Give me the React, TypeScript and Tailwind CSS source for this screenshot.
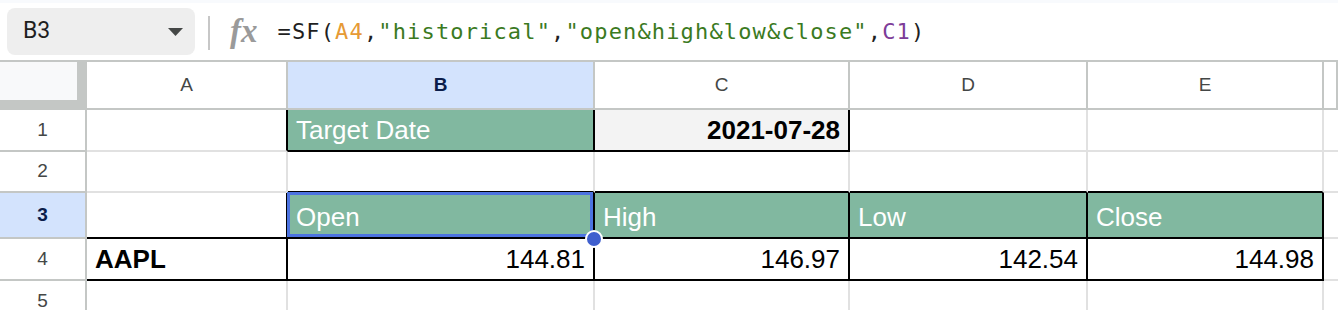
import React from "react";

type CellDef = {
  text?: string;
  right?: boolean;
  bold?: boolean;
  green?: boolean;
  gray?: boolean;
  br?: boolean; // black right border
  bb?: boolean; // black bottom border
};

const COLS = ["w-[201px]", "w-[307px]", "w-[255px]", "w-[238px]", "w-[236px]", "flex-1"];
const LETTERS = ["A", "B", "C", "D", "E", ""];

const ROWS: { n: number; h: string; cells: CellDef[] }[] = [
  {
    n: 1,
    h: "h-[42px]",
    cells: [
      { br: true },
      { text: "Target Date", green: true, br: true, bb: true },
      { text: "2021-07-28", right: true, bold: true, gray: true, br: true, bb: true },
      {},
      {},
      {},
    ],
  },
  {
    n: 2,
    h: "h-[41px]",
    cells: [{}, { bb: true }, { bb: true }, { bb: true }, { bb: true }, {}],
  },
  {
    n: 3,
    h: "h-[46px]",
    cells: [
      { br: true, bb: true },
      { text: "Open", green: true, br: true, bb: true },
      { text: "High", green: true, br: true, bb: true },
      { text: "Low", green: true, br: true, bb: true },
      { text: "Close", green: true, br: true, bb: true },
      {},
    ],
  },
  {
    n: 4,
    h: "h-[42px]",
    cells: [
      { text: "AAPL", bold: true, br: true, bb: true },
      { text: "144.81", right: true, br: true, bb: true },
      { text: "146.97", right: true, br: true, bb: true },
      { text: "142.54", right: true, br: true, bb: true },
      { text: "144.98", right: true, br: true, bb: true },
      {},
    ],
  },
  { n: 5, h: "h-[42px]", cells: [{}, {}, {}, {}, {}, {}] },
];

function Formula() {
  return (
    <div className="ml-[20px] whitespace-nowrap font-['DejaVu_Sans_Mono',monospace] text-[22px] tracking-[1.15px] text-[#1f1f1f]">
      <span>=SF(</span>
      <span className="text-[#e69a35]">A4</span>
      <span>,</span>
      <span className="text-[#3b7a1f]">"historical"</span>
      <span>,</span>
      <span className="text-[#3b7a1f]">"open&amp;high&amp;low&amp;close"</span>
      <span>,</span>
      <span className="text-[#7d3c98]">C1</span>
      <span>)</span>
    </div>
  );
}

function Toolbar() {
  return (
    <div>
      <div className="h-[3px] bg-[#f8fafd]" />
      <div className="flex h-[57px] items-center pl-[7px]">
        <div className="flex h-[47px] w-[188px] items-center rounded-lg bg-[#eeeeee] pl-[16px] pr-[12px]">
          <span className="font-['Roboto',sans-serif] text-[23px] text-[#1f1f1f]">B3</span>
          <svg className="ml-auto" width="15" height="8" viewBox="0 0 15 8">
            <path d="M0 0h15L7.5 8z" fill="#444746" />
          </svg>
        </div>
        <div className="ml-[13px] mt-[3px] h-[34px] w-[2px] bg-[#c7c7c7]" />
        <div className="ml-[20px] font-['Liberation_Serif',serif] text-[33px] font-bold italic leading-none text-[#9a9a9a]">
          fx
        </div>
        <Formula />
      </div>
    </div>
  );
}

function HeaderRow() {
  return (
    <div className="flex h-[50px] border-t-2 border-[#c4c7c5] font-['Liberation_Sans',sans-serif]">
      <div className="w-[87px] shrink-0 border-b-[10px] border-r-[10px] border-[#c4c7c5] bg-[#f8f9fa]" />
      {COLS.map((w, i) => (
        <div
          key={i}
          className={`${w} flex shrink-0 items-center justify-center border-b-2 border-r-2 border-[#c4c7c5] text-[19px] ${
            i === 1 ? "bg-[#d3e3fd] font-bold text-[#0b1d4a]" : "bg-white text-[#444746]"
          }`}
        >
          {LETTERS[i]}
        </div>
      ))}
    </div>
  );
}

function Cell({ def, w, n, col }: { def: CellDef; w: string; n: number; col: number }) {
  const selected = n === 3 && col === 1;
  return (
    <div
      className={`${w} relative flex h-full shrink-0 items-center border-b-2 border-r-2 px-[8px] text-[26px] ${
        def.br ? "border-r-black" : "border-r-[#e1e1e1]"
      } ${def.bb ? "border-b-black" : "border-b-[#e1e1e1]"} ${
        def.green ? "bg-[#81b8a0] text-white" : def.gray ? "bg-[#f3f3f3] text-black" : "bg-white text-black"
      } ${def.right ? "justify-end" : "justify-start"} ${def.bold ? "font-bold" : ""} ${
        n === 3 ? "pt-[4px]" : ""
      }`}
    >
      {def.text}
      {selected && (
        <>
          <div className="absolute -left-[1px] -top-[1px] bottom-[0px] right-[0px] border-[3px] border-[#4c73e0]" />
          <div className="absolute -bottom-[11px] -right-[10px] z-10 h-[18px] w-[18px] rounded-full border-2 border-white bg-[#3f5fce]" />
        </>
      )}
    </div>
  );
}

export default function App() {
  return (
    <div className="h-[310px] w-[1338px] overflow-hidden bg-white">
      <Toolbar />
      <HeaderRow />
      {ROWS.map((row) => (
        <div key={row.n} className={`flex ${row.h} font-['Liberation_Sans',sans-serif]`}>
          <div
            className={`flex w-[87px] shrink-0 items-center justify-center border-b-2 border-r-2 border-[#c4c7c5] text-[19px] ${
              row.n === 3 ? "bg-[#d3e3fd] font-bold text-[#0b1d4a]" : "bg-white text-[#444746]"
            }`}
          >
            {row.n}
          </div>
          {row.cells.map((c, i) => (
            <Cell key={i} def={c} w={COLS[i]} n={row.n} col={i} />
          ))}
        </div>
      ))}
    </div>
  );
}
